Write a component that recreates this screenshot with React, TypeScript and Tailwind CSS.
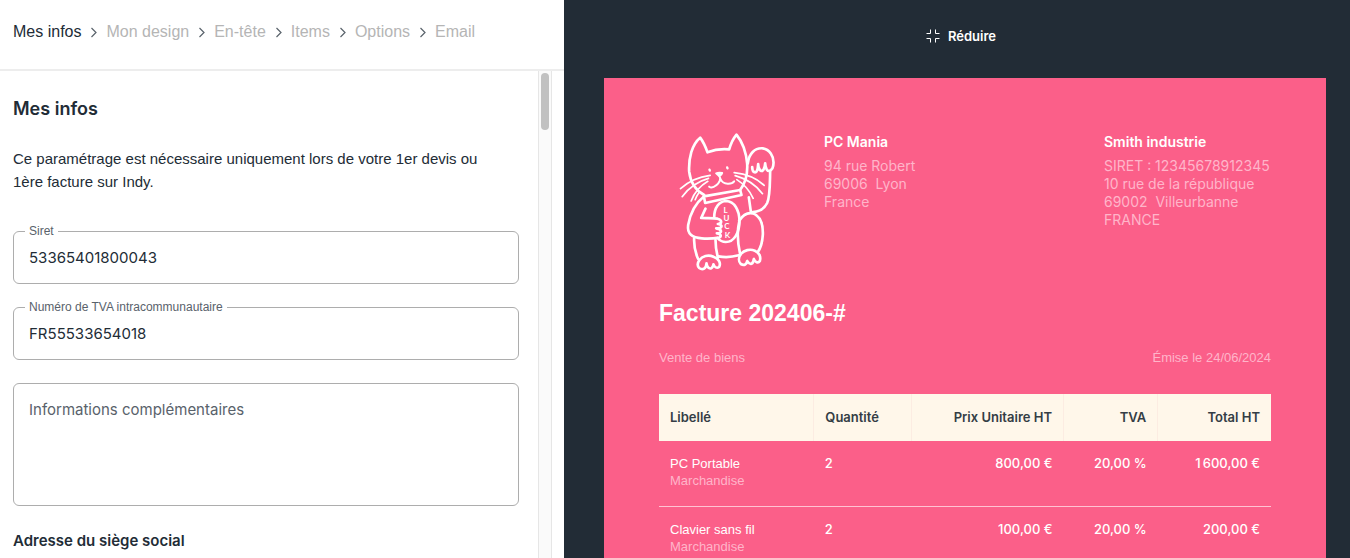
import { Fragment } from "react";

const steps = ["Mes infos", "Mon design", "En-tête", "Items", "Options", "Email"];

const fields = [
  { id: "siret", label: "Siret", value: "53365401800043" },
  { id: "tva", label: "Numéro de TVA intracommunautaire", value: "FR55533654018" },
];

const items = [
  { name: "PC Portable", kind: "Marchandise", qty: "2", price: "800,00 €", vat: "20,00 %", total: "1\u202f600,00 €" },
  { name: "Clavier sans fil", kind: "Marchandise", qty: "2", price: "100,00 €", vat: "20,00 %", total: "200,00 €" },
];

const Chevron = () => (
  <svg className="h-[13px] w-[13px] text-[#59626b]" viewBox="0 0 13 13" fill="none" stroke="currentColor" strokeWidth="1.2" aria-hidden="true">
    <path d="M4.5 2 L9 6.5 L4.5 11" />
  </svg>
);

const ReduceIcon = () => (
  <svg className="h-[14px] w-[14px]" viewBox="0 0 14 14" fill="none" stroke="currentColor" strokeWidth="1" aria-hidden="true">
    <path d="M0.5 4.5H4.5V0.5 M9.5 0.5V4.5H13.5 M0.5 9.5H4.5V13.5 M9.5 13.5V9.5H13.5" />
  </svg>
);

const CatLogo = () => (
  <svg
    className="h-[138px] w-[97px]"
    viewBox="58 36 290 414"
    fill="none"
    stroke="currentColor"
    strokeWidth="8"
    strokeLinecap="round"
    strokeLinejoin="round"
    role="img"
    aria-label="Chat porte-bonheur"
  >
    {/* head */}
    <path d="M133 222 C108 209 92 184 88 152 C86 112 96 70 121 50 C130 62 137 77 143 94 C163 86 188 83 208 85 C213 68 220 53 230 41 C247 62 259 94 262 128 C264 160 256 187 241 207" />
    {/* face */}
    <g strokeWidth="6">
      <path d="M149 146 L150 149 M202 139 L203 142" strokeWidth="7" />
      <path d="M169 157 C174 155 181 155 187 156 C186 161 182 163 178 165 Z" fill="currentColor" />
      <path d="M179 166 C184 174 179 186 169 193 C162 199 153 201 148 197 M180 169 C183 182 194 189 206 188 C214 188 220 185 223 181" />
    </g>
    {/* whiskers */}
    <g strokeWidth="5">
      <path d="M151 163 C120 167 87 180 62 203 M146 172 C114 181 86 201 67 227 M144 181 C122 194 103 216 94 240 M117 215 C113 221 108 229 106 236" />
      <path d="M223 155 C258 159 291 172 313 193 M226 164 C259 173 288 192 308 218 M231 176 C250 188 269 208 280 232" />
    </g>
    {/* collar */}
    <path d="M132 226 L241 207 L245 222 L136 246 Z" />
    {/* raised paw */}
    <path d="M264 127 C267 98 285 80 309 82 C329 85 342 105 341 126 C341 137 336 147 329 150 C323 151 317 144 316 127 C315 143 309 153 302 149 C297 145 295 137 295 129 C294 145 291 156 284 154 C279 152 277 145 277 138" />
    <path d="M331 151 C330 189 331 226 322 246 C314 262 299 272 279 273 M267 229 L273 272" />
    {/* left arm */}
    <path d="M133 226 C108 246 91 279 85 312 C81 339 97 349 126 352 C149 354 164 352 178 350 C188 345 180 337 171 337 C189 336 187 325 169 322 C189 323 190 311 174 309 C187 309 188 297 173 293 C158 290 140 292 124 291 L137 263" />
    {/* medallion */}
    <path d="M163 290 C163 260 177 241 199 240 C224 241 238 267 239 299 C239 335 223 363 198 363 C188 363 179 358 173 351" />
    {/* legs */}
    <path d="M238 299 C249 282 265 274 279 277 C301 285 310 311 309 341 C308 363 302 381 294 393 M238 303 C231 333 234 369 241 400" />
    <path d="M103 352 C102 374 106 395 115 414 M167 356 C167 376 170 393 174 409 M176 406 C197 410 218 408 237 403" />
    {/* feet */}
    <path d="M119 417 C127 405 145 400 161 407 C177 413 184 426 178 438 C171 443 164 439 161 430 C158 444 149 447 142 435 C141 431 140 428 140 427 C139 443 129 449 118 441 C112 434 113 425 119 417 Z" />
    <path d="M244 398 C253 388 270 383 285 389 C298 394 304 407 300 420 C295 428 286 424 282 414 C280 430 271 434 262 420 C261 430 253 435 243 429 C235 421 236 408 244 398 Z" />
    <g fill="currentColor" stroke="none" fontFamily="Lato, sans-serif" fontSize="24" fontWeight="700">
      <text x="191" y="277">L</text>
      <text x="191" y="301">U</text>
      <text x="193" y="325">C</text>
      <text x="195" y="350">K</text>
    </g>
  </svg>
);

const App = () => {
  return (
    <div className="grid h-screen grid-cols-[564fr_786fr] overflow-hidden bg-white font-['Inter',sans-serif] text-[#222c36]">
      {/* Formulaire */}
      <section className="flex min-w-0 flex-col overflow-hidden">
        <nav className="flex items-center gap-1.5 border-b-2 border-[#ededed] px-[13px] pt-5 pb-[25px] font-['Liberation_Sans',sans-serif] text-base leading-6">
          {steps.map((step, index) => (
            <Fragment key={step}>
              {index > 0 && <Chevron />}
              <a href="#" className={index === 0 ? "text-[#222c36]" : "text-[#b5b5b5]"}>
                {step}
              </a>
            </Fragment>
          ))}
        </nav>

        <div className="flex min-h-0 flex-1 pr-3">
          <form className="min-w-0 flex-1 overflow-hidden pt-6 pr-[19px] pl-[13px]">
            <h2 className="text-lg leading-7 font-semibold">Mes infos</h2>
            <p className="mt-6 font-['Liberation_Sans',sans-serif] text-[15px] leading-[23px]">
              Ce paramétrage est nécessaire uniquement lors de votre 1er devis ou
              <br />
              1ère facture sur Indy.
            </p>

            <div className="mt-[38px] flex flex-col gap-[23px]">
              {fields.map((field) => (
                <div key={field.id} className="relative">
                  <label
                    htmlFor={field.id}
                    className="absolute -top-2 left-3 bg-white px-1 font-['Liberation_Sans',sans-serif] text-xs leading-4 text-[#59626b]"
                  >
                    {field.label}
                  </label>
                  <input
                    id={field.id}
                    type="text"
                    defaultValue={field.value}
                    className="block h-[53px] w-full rounded-md border border-[#adadad] px-[15px] text-[15px] outline-none"
                  />
                </div>
              ))}
              <textarea
                aria-label="Informations complémentaires"
                placeholder="Informations complémentaires"
                className="block h-[123px] w-full resize-none rounded-md border border-[#adadad] px-[15px] py-[14px] text-[15px] leading-6 outline-none placeholder:text-[#59626b]"
              />
              <h3 className="text-[15px] leading-6 font-semibold">Adresse du siège social</h3>
            </div>
          </form>

          <div className="w-[14px] border-x border-[#e6e6e6] bg-[#fafafa] px-0.5 pt-0.5">
            <div className="h-[57px] rounded-full bg-[#c1c1c1]" />
          </div>
        </div>
      </section>

      {/* Aperçu */}
      <section className="flex min-w-0 flex-col overflow-hidden bg-[#222c36] pr-6">
        <div className="flex justify-center pt-6 pb-[30px] pl-8">
          <button type="button" className="flex items-center gap-2 text-[13px] leading-6 font-semibold text-white">
            <ReduceIcon />
            Réduire
          </button>
        </div>

        <article className="ml-10 flex-1 bg-[#fb5f89] px-[55px] pt-[55px] text-white">
          <header className="grid grid-cols-[165fr_280fr_167fr] text-sm leading-[18px]">
            <div className="pl-5">
              <CatLogo />
            </div>
            <div>
              <p className="font-semibold">PC Mania</p>
              <address className="mt-1.5 whitespace-pre text-[#ffb5c9] not-italic">
                {"94 rue Robert\n69006  Lyon\nFrance"}
              </address>
            </div>
            <div>
              <p className="font-semibold">Smith industrie</p>
              <address className="mt-1.5 whitespace-pre text-[#ffb5c9] not-italic">
                {"SIRET : 12345678912345\n10 rue de la république\n69002  Villeurbanne\nFRANCE"}
              </address>
            </div>
          </header>

          <h1 className="mt-[26px] font-['Liberation_Sans',sans-serif] text-[23px] leading-8 font-bold">
            Facture 202406-#
          </h1>
          <div className="mt-5 flex justify-between font-['Liberation_Sans',sans-serif] text-[13px] leading-[18px] text-[#ffb5c9]">
            <p>Vente de biens</p>
            <p>Émise le 24/06/2024</p>
          </div>

          <table className="mt-[27px] w-full table-fixed text-[13px] leading-[17px]">
            <colgroup>
              <col className="w-[25.3%]" />
              <col className="w-[16%]" />
              <col className="w-[24.8%]" />
              <col className="w-[15.4%]" />
              <col className="w-[18.5%]" />
            </colgroup>
            <thead className="bg-[#fff7ea] text-[#343d45]">
              <tr className="h-[47px] *:border-r *:border-[#fcece2] *:px-[11px] *:font-semibold *:last:border-r-0">
                <th className="text-left">Libellé</th>
                <th className="text-left">Quantité</th>
                <th className="text-right">Prix Unitaire HT</th>
                <th className="text-right">TVA</th>
                <th className="text-right">Total HT</th>
              </tr>
            </thead>
            <tbody>
              {items.map((item) => (
                <tr
                  key={item.name}
                  className="h-[65px] border-b border-[#ffc3d3] align-top *:px-[11px] *:pt-[14px]"
                >
                  <td className="font-['Liberation_Sans',sans-serif]">
                    <p>{item.name}</p>
                    <p className="text-[#ffb5c9]">{item.kind}</p>
                  </td>
                  <td className="font-medium">{item.qty}</td>
                  <td className="text-right font-medium">{item.price}</td>
                  <td className="text-right font-medium">{item.vat}</td>
                  <td className="text-right font-medium">{item.total}</td>
                </tr>
              ))}
            </tbody>
          </table>
        </article>
      </section>
    </div>
  );
};

export default App;
